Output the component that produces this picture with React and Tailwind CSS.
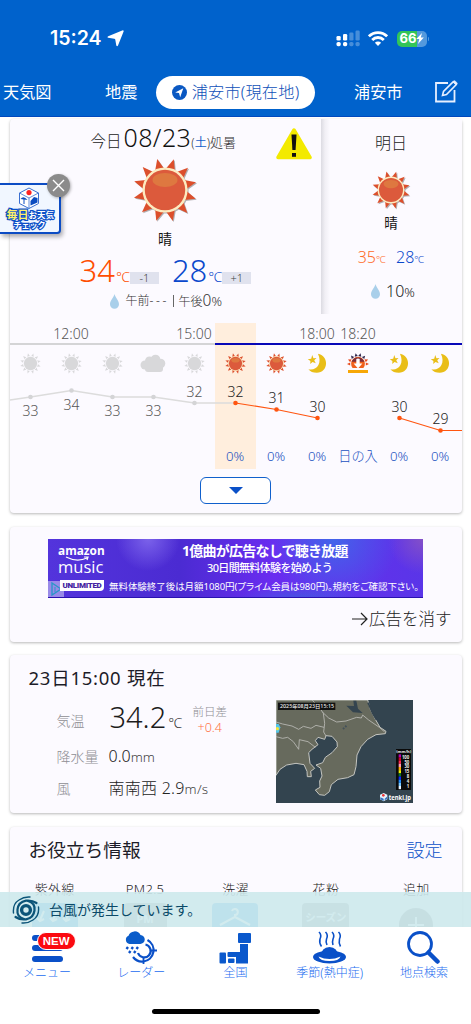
import React from 'react';
import clsx from 'clsx';

const RAYS = [15, 45, 75, 105, 135, 165, 195, 225, 255, 285, 315, 345];

function Sun({ size, muted }) {
  return (
    <svg
      width={size}
      height={size}
      viewBox="-32 -32 64 64"
      className={clsx('block', !muted && size > 30 && 'drop-shadow-[1px_1px_0.5px_rgba(0,0,0,0.3)]')}
    >
      {RAYS.map((a) => (
        <polygon key={a} points="-4.6,-21 4.6,-21 0.5,-32" fill={muted ? '#d8d8da' : '#dc4f2c'} transform={`rotate(${a})`} />
      ))}
      <circle r="22.6" fill={muted ? '#fcfaff' : '#fdebc0'} />
      <circle r="20.2" fill={muted ? '#d8d8da' : '#dc5a3c'} />
      {!muted && <ellipse cy="-10" rx="12.5" ry="7" fill="#de7840" />}
    </svg>
  );
}

function Cloud() {
  return (
    <svg width="26" height="19" viewBox="0 0 26 19" className="block" fill="#d8d8da">
      <circle cx="5" cy="11" r="4.5" />
      <circle cx="9.5" cy="7" r="4.5" />
      <circle cx="15.5" cy="5.5" r="4.8" />
      <circle cx="20.5" cy="9.5" r="4.8" />
      <rect x="5" y="7" width="18" height="11" rx="3" />
    </svg>
  );
}

function Moon() {
  return (
    <svg width="20" height="21" viewBox="0 0 21 22" className="block">
      <path d="M11.5 0.8C17 2 20 6 20 10.8C20 16.5 16 20.8 10.3 20.8C6.5 20.8 3.3 19.3 1.5 17C9.5 19 16.5 11.5 11.5 0.8Z" fill="#e9be18" />
      <path d="M5.5 2.2L6.8 5.6L10 5.2L7.6 7.7L9.2 10.8L5.8 9.5L3.4 11.6L3.6 8.4L0.8 6.6L4.4 6Z" fill="#e9be18" />
    </svg>
  );
}

function Sunset() {
  return (
    <svg width="22" height="20" viewBox="0 0 22 20" className="block">
      {[-90, -66, -40, -13, 13, 40, 66, 90].map((a) => (
        <polygon key={a} points="-1.6,-7.8 1.6,-7.8 0.1,-11" fill={Math.abs(a) > 50 ? '#e84a1c' : '#32284e'} transform={`translate(11 11) rotate(${a})`} />
      ))}
      <path d="M5.6 15A6.9 6.9 0 1 1 16.4 15Z" fill="#f0601c" />
      <path d="M4.6 8.8A6.9 6.9 0 0 1 17.4 8.8Z" fill="#7c2f3c" />
      <path d="M9.3 6Q11 4.8 12.7 6V10.5H15.4L11 15.4L6.6 10.5H9.3Z" fill="#fff" />
      <rect x="1" y="17" width="20" height="3" fill="#f7a707" />
    </svg>
  );
}

function Drop() {
  return (
    <svg width="9" height="15" viewBox="0 0 9 15" className="block" fill="#a9cfea">
      <path d="M4.5 0C5.2 3.2 9 6.6 9 10.2A4.5 4.5 0 0 1 0 10.2C0 6.6 3.8 3.2 4.5 0Z" />
    </svg>
  );
}

function StatusBar() {
  return (
    <div className="flex h-[75px] items-center justify-between pl-[50px] pr-[42px] pt-0.5">
      <div className="flex items-center">
        <span className="font-['Inter',sans-serif] text-[19.5px] font-semibold">15:24</span>
        <svg width="17" height="17" viewBox="0 0 17 17" className="ml-[5px]" fill="#fff">
          <path d="M15.2 0.4Q17 -0.1 16.6 1.6L11 15.4Q10.200 17 9.300 15.400L8.300 9.800Q8.200 8.900 7.300 8.800L1.200 7.800Q-0.300 7.200 1.200 6.200Z" />
        </svg>
      </div>
      <div className="flex items-center">
        <svg width="24" height="17" viewBox="0 0 24 17" fill="#fff">
          <rect x="0.5" y="6" width="4.2" height="4.5" rx="1.3" />
          <rect x="7" y="4" width="4.2" height="6.5" rx="1.3" />
          <rect x="0.5" y="12" width="4.2" height="4.2" rx="1.6" />
          <rect x="7" y="12" width="4.2" height="4.2" rx="1.6" />
          <g opacity="0.28">
            <rect x="13.3" y="2.5" width="4.2" height="8" rx="1.3" />
            <rect x="19.5" y="0.5" width="4.2" height="10" rx="1.3" />
            <rect x="13.3" y="12" width="4.2" height="4.2" rx="1.6" />
            <rect x="19.5" y="12" width="4.2" height="4.2" rx="1.6" />
          </g>
        </svg>
        <svg width="20" height="15" viewBox="0 0 20 15" className="ml-2" fill="none" stroke="#fff" strokeWidth="2.8">
          <path d="M0.9 5.3A12.9 12.9 0 0 1 19.1 5.3" />
          <path d="M4.2 8.9A8.2 8.2 0 0 1 15.8 8.9" />
          <path d="M10 15L6.9 11.8A4.4 4.4 0 0 1 13.1 11.8Z" fill="#fff" stroke="none" />
        </svg>
        <div className="ml-[9px] flex h-4 w-[30px] items-center justify-center rounded-[5px] bg-[linear-gradient(90deg,#32c558_66%,#5399dd_66%)]">
          <span className="font-['Inter',sans-serif] text-[13px] font-bold leading-none">66</span>
          <svg width="8" height="11" viewBox="0 0 8 11" fill="#fff">
            <path d="M6 0L0.3 6H3.3L2 11L7.8 4.6H4.8Z" />
          </svg>
        </div>
        <div className="ml-px h-1 w-px rounded-r bg-[#5399dd]" />
      </div>
    </div>
  );
}

function Tabs() {
  return (
    <div className="flex h-[34px] items-center text-[16.2px] font-normal">
      <span className="ml-[3px] w-[102px]">天気図</span>
      <span className="w-[51px]">地震</span>
      <div className="flex h-[33px] w-[159px] items-center justify-center rounded-full bg-white font-light text-[#0f50b8]">
        <svg width="15" height="15" viewBox="0 0 15 15" className="mr-[5px]">
          <circle cx="7.5" cy="7.5" r="7.5" fill="#0a58c2" />
          <path d="M11.3 3.2L8.2 12.2L7 8L3.2 7.6Z" fill="#fff" />
        </svg>
        <span className="tracking-[0.2px]">浦安市(現在地)</span>
      </div>
      <span className="ml-[39px]">浦安市</span>
      <svg width="24" height="24" viewBox="0 0 24 24" className="ml-[31px]" fill="none" stroke="#e6efff">
        <path d="M14 3H2V21.5H20.5V10" strokeWidth="1.8" />
        <path d="M8.5 15.500L9.500 11.500L19.300 1.700L22.300 4.500L12.500 14.500Z" strokeWidth="1.6" />
        <path d="M19 2L20.6 0.5L23.5 3.2L22 4.700Z" fill="#e6efff" strokeWidth="0.5" />
      </svg>
    </div>
  );
}

function Card({ className, children }) {
  return (
    <section className={clsx('ml-[9.5px] w-[452px] shrink-0 rounded bg-[#fcfaff] shadow-[0_1px_3px_rgba(0,0,0,0.28)]', className)}>
      {children}
    </section>
  );
}

function Today() {
  return (
    <div className="relative h-[195px] w-[311px]">
      <div className="flex h-[38px] items-baseline pl-[81px] leading-[37px]">
        <span className="text-[15.5px] text-[#222]">今日</span>
        <span className="ml-0.5 text-[25px] tracking-[0.4px] text-[#111]">08/23</span>
        <span className="text-[12px] text-[#333]">(<span className="font-normal text-[#1560c8]">土</span>)</span>
        <span className="text-[13px] text-[#333]">処暑</span>
      </div>
      <svg width="36" height="32" viewBox="0 0 36 32" className="absolute left-[266px] top-[9px]">
        <path d="M18 2L34 29.5H2Z" fill="#f3ea00" stroke="#f3ea00" strokeWidth="3.5" strokeLinejoin="round" />
        <path d="M15.5 6.5H20.5L19.6 22H16.4Z" fill="#111" />
        <rect x="16" y="25" width="4" height="3.8" fill="#111" />
      </svg>
      <div className="mt-px ml-[123px]"><Sun size={64} /></div>
      <div className="mt-[7px] h-5 text-center text-[14px] font-normal leading-5 text-[#111]">晴</div>
      <div className="mt-[3px] flex h-[37px] items-baseline pl-[70px] leading-[37px]">
        <span className="text-[31px] text-[#ff4d00]">34</span>
        <span className="ml-px w-[14px] text-[14px] text-[#ff4d00]">℃</span>
        <span className="h-3 w-[29px] bg-[#e0e2ee] text-center text-[11px] leading-3 text-[#444]">-1</span>
        <span className="ml-[13px] text-[31px] text-[#0a48cc]">28</span>
        <span className="ml-px w-[14px] text-[14px] text-[#0a48cc]">℃</span>
        <span className="h-3 w-[29px] bg-[#e0e2ee] text-center text-[11px] leading-3 text-[#444]">+1</span>
      </div>
      <div className="mt-px flex h-[22px] items-center pl-[100px] text-[12px] text-[#333]">
        <Drop />
        <span className="ml-[7px] w-[47px]">午前<span className="tracking-[2.6px]">---</span></span>
        <span className="h-3 w-px bg-[#666]" />
        <span className="ml-[5px] flex items-baseline leading-5">午後<span className="text-[15.500px]">0</span><span className="text-[13px]">%</span></span>
      </div>
    </div>
  );
}

function Tomorrow() {
  return (
    <div className="flex h-[195px] w-[141px] flex-col items-center bg-[linear-gradient(90deg,#dcdbe2_0px,#f1eff5_4px,#fcfaff_9px)]">
      <div className="mt-3 h-6 text-[16px] leading-6 text-[#222]">明日</div>
      <div className="mt-4"><Sun size={38} /></div>
      <div className="mt-1 h-5 text-[13.5px] font-normal leading-5 text-[#111]">晴</div>
      <div className="mt-[14px] flex h-5 items-baseline text-[16px] leading-5">
        <span className="text-[#ff6a28]">35</span>
        <span className="w-[12px] text-[10px] text-[#ff6a28]">℃</span>
        <span className="ml-2 text-[#0a48cc]">28</span>
        <span className="w-[10px] text-[10px] text-[#0a48cc]">℃</span>
      </div>
      <div className="mt-3 flex h-6 items-center pl-1 text-[16px] text-[#222]">
        <Drop />
        <span className="ml-[6px]">10<span className="text-[13px]">%</span></span>
      </div>
    </div>
  );
}

const HOURS = [
  { icon: 'past', pop: '' },
  { time: '12:00', icon: 'past', pop: '' },
  { icon: 'past', pop: '' },
  { icon: 'cloud', pop: '' },
  { time: '15:00', icon: 'past', pop: '' },
  { icon: 'sun', pop: '0%' },
  { icon: 'sun', pop: '0%' },
  { time: '18:00', icon: 'moon', pop: '0%' },
  { time: '18:20', icon: 'sunset', pop: '日の入' },
  { icon: 'moon', pop: '0%' },
  { icon: 'moon', pop: '0%' },
];

// x/y of the marker, then the baseline of its label
const TEMPS = [
  [20.5, 24, 43, '33'],
  [61.5, 17.5, 37, '34'],
  [102.5, 24, 43, '33'],
  [143.5, 24, 43, '33'],
  [184.5, 30, 24, '32'],
  [225.5, 30, 24, '32'],
  [266.5, 36.5, 30, '31'],
  [307.5, 45, 38.5, '30'],
  [389.5, 45, 38.5, '30'],
  [430.5, 57.5, 51, '29'],
];

function HourIcon({ kind }) {
  if (kind === 'past') return <Sun size={21} muted />;
  if (kind === 'cloud') return <Cloud />;
  if (kind === 'sun') return <Sun size={21} />;
  if (kind === 'moon') return <Moon />;
  return <Sunset />;
}

function Hourly() {
  return (
    <div className="mt-[9px] h-[146px] bg-[linear-gradient(90deg,transparent_205px,#ffeedd_205px,#ffeedd_246px,transparent_246px)]">
      <div className="grid h-[20px] w-[451px] grid-cols-11">
        {HOURS.map((h, i) => (
          <span key={i} className="flex justify-center whitespace-nowrap text-[14px] leading-[22px] text-[#555]">{h.time}</span>
        ))}
      </div>
      <div className="h-0.5 bg-[linear-gradient(90deg,#d4d4d6_205px,#0808b8_205px)]" />
      <div className="grid h-[35px] w-[451px] grid-cols-11">
        {HOURS.map((h, i) => (
          <span key={i} className="flex items-center justify-center pt-px"><HourIcon kind={h.icon} /></span>
        ))}
      </div>
      <svg width="452" height="66" viewBox="0 7 452 66" className="block overflow-visible text-[14px]">
        <polyline points="0,27 20.5,24 61.5,17.5 102.5,24 143.5,24 184.5,30 225.5,30" fill="none" stroke="#dcdcdc" strokeWidth="1.3" />
        <polyline points="225.5,30 266.5,36.5 307.5,45" fill="none" stroke="#ff5510" strokeWidth="1.2" />
        <polyline points="389.5,45 430.5,57.5 452,57.5" fill="none" stroke="#ff5510" strokeWidth="1.2" />
        {TEMPS.map(([x, y, ty, label], i) => (
          <g key={i}>
            <circle cx={x} cy={y} r="2.3" fill={i < 5 ? '#d4d4d6' : '#ff5510'} />
            <text x={x} y={ty} textAnchor="middle" fill={i < 5 ? '#555' : '#222'}>{label}</text>
          </g>
        ))}
      </svg>
      <div className="grid h-[22px] w-[451px] grid-cols-11">
        {HOURS.map((h, i) => (
          <span key={i} className="flex justify-center whitespace-nowrap text-[13.2px] leading-[21px] text-[#1a50c0]">{h.pop}</span>
        ))}
      </div>
    </div>
  );
}

function Ad() {
  return (
    <div className="mx-auto flex h-[59px] w-[375px] overflow-hidden border-b border-[#2a12b0] bg-[radial-gradient(circle_at_100px_0px,#7b62ea_0px,transparent_32px),radial-gradient(circle_at_285px_0px,#4264ea_0px,transparent_65px),radial-gradient(ellipse_at_250px_60px,#4356e0_0px,transparent_60px),radial-gradient(circle_at_375px_0px,#8450c8_0px,transparent_35px),linear-gradient(90deg,#5334dc,#4b2bd2_35%,#6a2cf0_60%,#5a35e8)] text-white">
      <div className="relative w-[60px] shrink-0 pt-1 pl-[10px]">
        <svg width="16" height="16" viewBox="0 0 16 16" className="absolute bottom-0 left-0">
          <rect width="16" height="16" fill="#c8c4f0" opacity="0.6" />
          <path d="M4 2L13 8L4 14Z" fill="none" stroke="#2697c8" strokeWidth="1.3" />
          <path d="M7 6V11" stroke="#2697c8" />
        </svg>
        <div className="font-['Open_Sans',sans-serif] text-[11.8px] font-bold leading-[15px]">amazon</div>
        <svg width="26" height="5" viewBox="0 0 26 5" className="absolute left-[17px] top-[17px]" fill="none" stroke="#fff" strokeWidth="1.2">
          <path d="M1 1Q12 6.5 22 2M19 1H23L22 4" />
        </svg>
        <div className="font-['Open_Sans',sans-serif] text-[16.5px] font-medium leading-[18px]">music</div>
        <div className="relative mt-[4px] ml-[2px] h-[11px] w-[44px] rounded-br bg-white text-center font-['Roboto',sans-serif] text-[8px] font-black leading-[11px] tracking-[-0.3px] text-[#4422a0]">UNLIMITED</div>
      </div>
      <div className="w-[315px] whitespace-nowrap">
        <div className="mt-[3px] ml-[74px] text-[14px] font-bold leading-[17px] tracking-[-0.75px]">1億曲が広告なしで聴き放題</div>
        <div className="ml-[99px] text-[11px] font-medium leading-[17px] tracking-[-0.650px]">30日間無料体験を始めよう</div>
        <div className="mt-[2px] ml-px text-[9.500px] font-normal leading-[17px] tracking-[-0.050px] [font-feature-settings:'palt']">無料体験終了後は月額1080円(プライム会員は980円)。規約をご確認下さい。</div>
      </div>
    </div>
  );
}

function RadarMap() {
  const legend = ['#b400b4', '#d20028', '#ff2850', '#ff9bb4', '#ffaa00', '#f5f000', '#0a7828', '#0a28ff', '#1e8cff', '#78c8ff', '#e8f4ff'];
  return (
    <svg width="137" height="103" viewBox="0 0 411 309" className="block shrink-0">
      <rect width="411" height="309" fill="#33444f" />
      <path
        d="M0 0H275L283 28L298 58L312 82L330 94L328 101L300 104L275 118L255 140L243 165L240 200L234 224L215 233L186 238L166 254L160 275L146 286L130 284L118 270L132 262L131 243L138 228L134 205L120 195L140 188L148 172L168 158L184 140L183 126L168 109L150 107L146 118L126 112L118 122L126 134L108 148L98 158L102 190L116 205L104 214L106 230L94 230L93 214L84 194L60 190L32 195L12 208L0 226Z"
        fill="#676a5d"
        stroke="#c4c5c0"
        strokeWidth="3"
        strokeLinejoin="round"
      />
      <path d="M211 17L234 18L232 2H241L246 26L260 39L231 37Z" fill="#34444f" />
      <path d="M276 8L290 40L301 59" stroke="#34444f" strokeWidth="5" fill="none" />
      <g fill="none" stroke="#b9bab5" strokeWidth="2.6" strokeLinejoin="round">
        <path d="M108 0L130 22L142 40L146 70L143 96L150 108" />
        <path d="M140 37L158 54L182 66L210 63L242 52L256 54L260 45L278 60L310 82L326 96" />
        <path d="M0 66L20 72L48 78L68 88L82 79L105 85L120 76L144 82" />
        <path d="M0 110L20 115L35 112L52 125L68 148L70 119L96 125L118 142" />
      </g>
      <path d="M0 72H8L13 82L8 98H0Z" fill="#55c5e8" />
      <circle cx="4" cy="86" r="5" fill="#f5e436" />
      <path d="M201 87L213 76" stroke="#44515a" strokeWidth="6" strokeDasharray="5 4" />
      <rect x="6" y="8" width="172" height="22" fill="#111" />
      <text x="12" y="24" fontSize="15" fontWeight="500" fill="#eee" textLength="162" lengthAdjust="spacingAndGlyphs">2025年08月23日15:15</text>
      <rect x="360" y="147" width="45" height="123" fill="#0a0a0a" />
      <text x="383" y="160" fontSize="12" fontWeight="700" fill="#eee" textAnchor="middle">(mm/h)</text>
      {legend.map((c, i) => (
        <rect key={c} x="368" y={163 + i * 9.5} width="7" height="9.5" fill={c} />
      ))}
      {['100', '50', '30', '15', '8', '4', '1'].map((t, i) => (
        <text key={t} x="400" y={176 + i * 14.7} fontSize="13" fontWeight="700" fill="#eee" textAnchor="end">{t}</text>
      ))}
      <path d="M312 284L323 279L334 284V298L323 304L312 298Z" fill="#e4f1fc" />
      <path d="M313 292L323 296V303L313 298Z" fill="#2f6fc0" />
      <path d="M326 296L333 290V297L326 301Z" fill="#2f6fc0" />
      <circle cx="322" cy="286" r="4" fill="#e33" />
      <text x="338" y="300" fontSize="20" fontWeight="700" fill="#fff" textLength="67" lengthAdjust="spacingAndGlyphs">tenki.jp</text>
    </svg>
  );
}

function CurrentCard() {
  return (
    <Card className="mt-[13px] h-[158px] overflow-hidden pl-[19px]">
      <h2 className="mt-2.5 h-7 text-[18.5px] font-normal leading-[26px] tracking-[0.75px] text-[#1c1c28]">23日15:00 現在</h2>
      <div className="flex">
        <div className="w-[219px] pl-[28px] text-[14px] text-[#8e8e93]">
          <div className="mt-[5px] flex h-11 items-center">
            <span className="w-[53px]">気温</span>
            <span className="flex w-[83px] items-baseline text-[29px] leading-10 text-[#1c1c1c]">34.2<span className="ml-0.5 text-[14px] text-[#333]">℃</span></span>
            <span className="flex flex-col items-center text-[11.5px] leading-4">
              前日差
              <span className="text-[12.5px] text-[#ff7043]">+0.4</span>
            </span>
          </div>
          <div className="flex h-7 items-center">
            <span className="w-[52px]">降水量</span>
            <span className="text-[16px] text-[#222]">0.0<span className="text-[13.500px] text-[#444]">mm</span></span>
          </div>
          <div className="mt-1 flex h-7 items-center">
            <span className="w-[52px]">風</span>
            <span className="text-[16px] tracking-[0.25px] text-[#222]">南南西 2.9<span className="text-[13.500px] text-[#444]">m/s</span></span>
          </div>
        </div>
        <div className="ml-[28.500px] mt-[7px]"><RadarMap /></div>
      </div>
    </Card>
  );
}

function InfoTile({ kind }) {
  if (kind === 'add') {
    return (
      <div className="mt-[5px] flex h-[34px] w-[34px] items-center justify-center rounded-full bg-[#888]">
        <svg width="16" height="16" viewBox="0 0 16 16" stroke="#fff" strokeWidth="2"><path d="M8 0V16M0 8H16" /></svg>
      </div>
    );
  }
  if (kind === 'season') {
    return <div className="h-[46px] w-[47px] rounded bg-[#999] pt-[5px] text-center text-[10.5px] font-bold leading-[18px] text-white">シーズン</div>;
  }
  if (kind === 'pm') {
    return <div className="h-[46px] w-[43px] rounded bg-[#999] pt-[7px] text-center text-[11px] font-bold leading-[18px] text-white">PM</div>;
  }
  return (
    <div className="h-[46px] w-[46px] rounded bg-[#3ba7e8]">
      <svg width="46" height="30" viewBox="0 0 46 30" fill="none" stroke="#fff" strokeWidth="2">
        {kind === 'uv' && <path d="M12 8L8 17M25 8L21 17M38 8L34 17M5 15L8 18L12 16M18 15L21 18L25 16M31 15L34 18L38 16" />}
        {kind === 'wash' && <path d="M20 8A3 3 0 1 1 23 12V14L8 22M23 14L38 22" />}
      </svg>
    </div>
  );
}

const INFOS = [
  ['紫外線', 'uv'],
  ['PM2.5', 'pm'],
  ['洗濯', 'wash'],
  ['花粉', 'season'],
  ['追加', 'add'],
];

function InfoCard() {
  return (
    <Card className="mt-[14px] h-[140px]">
      <div className="flex h-[46px] items-center justify-between px-[19px]">
        <h2 className="text-[18.700px] font-normal text-[#1c1c28]">お役立ち情報</h2>
        <span className="text-[18px] text-[#0a50c8]">設定</span>
      </div>
      <div className="grid grid-cols-5">
        {INFOS.map(([label, kind]) => (
          <div key={label} className="flex flex-col items-center text-[13px] text-[#222]">
            <span className="h-[30px] leading-[33px] tracking-[0.3px]">{label}</span>
            <InfoTile kind={kind} />
          </div>
        ))}
      </div>
    </Card>
  );
}

// sticks to the left edge, above the scrolling cards
function CheckBanner() {
  return (
    <div className="absolute left-0 top-[183px] h-[51px] w-[61px] rounded-r border-2 border-l-0 border-[#0c4cc4] bg-[#f1f7ff] shadow-[2px_3px_4px_rgba(0,0,0,0.3)]">
      <svg width="22" height="22" viewBox="0 0 22 22" className="ml-[18px] mt-[2px] block">
        <path d="M11 1L20.5 6V16.5L11 21.5L1.5 16.5V6Z" fill="#fff" stroke="#3a6fd0" strokeWidth="1" />
        <path d="M11 11V21.5M11 11L1.5 6M11 11L20.5 6" stroke="#3a6fd0" strokeWidth="0.8" />
        <circle cx="11" cy="5.6" r="2.6" fill="#f22" />
        <path d="M2.5 12Q5.5 8 9.5 13Z" fill="#0a4cc0" />
        <path d="M6 12V17" stroke="#0a4cc0" />
        <path d="M12.5 14L16 10L19.5 11V15.5L12.5 18.5Z" fill="#0a4cc0" />
      </svg>
      <div className="flex h-[12px] w-[54px] items-center justify-end whitespace-nowrap text-[8.500px] font-bold leading-[12px] text-white [paint-order:stroke_fill] [-webkit-text-stroke:2.4px_#0c50c8]">
        <span className="text-[11px] text-[#fff06a]">毎日</span>お天気
      </div>
      <div className="-mt-px text-center text-[8px] font-bold leading-[10px] text-white [paint-order:stroke_fill] [-webkit-text-stroke:2.4px_#0c50c8]">チェック</div>
      <div className="absolute -top-[11px] left-[47px] flex h-[23px] w-[23px] items-center justify-center rounded-full bg-[#8b8b8b] shadow-[1px_1px_3px_rgba(0,0,0,0.3)]">
        <svg width="13" height="13" viewBox="0 0 13 13" stroke="#fff" strokeWidth="1.4">
          <path d="M1 1L12 12M12 1L1 12" />
        </svg>
      </div>
    </div>
  );
}

function Typhoon() {
  return (
    <svg width="28" height="28" viewBox="0 0 28 28" fill="none" stroke="#0b5478" strokeLinecap="round">
      <circle cx="14" cy="14" r="4.4" strokeWidth="3.4" />
      <path d="M12 23Q4.500 21 5.500 13.500Q6.500 6 14 4.700Q20 4 24.500 7" strokeWidth="2.2" />
      <path d="M16 5Q23.500 7 22.500 14.500Q21.500 22 14 23.300Q8 24 3.500 21" strokeWidth="2.2" />
      <path d="M1.500 17Q0.500 8 7 4Q12 0.5 18 1" strokeWidth="1.4" />
      <path d="M26.500 11Q27.500 20 21 24Q16 27.5 10 27" strokeWidth="1.4" />
    </svg>
  );
}

function NavIcon({ kind }) {
  if (kind === 'menu') {
    return (
      <div className="relative h-[32px] w-[31px]">
        <div className="flex flex-col gap-[4.500px] pt-[3px]">
          <span className="h-[6px] rounded-full bg-[#0a50c8]" />
          <span className="h-[6px] rounded-full bg-[#0a50c8]" />
          <span className="h-[6px] rounded-full bg-[#0a50c8]" />
        </div>
        <span className="absolute left-[5px] top-0 h-[18px] w-[39px] rounded-full border border-white bg-[#fb0a10] text-center font-['Liberation_Sans',sans-serif] text-[11.5px] font-bold leading-4 text-white">NEW</span>
      </div>
    );
  }
  if (kind === 'radar') {
    return (
      <svg width="32" height="33" viewBox="0 0 32 33" fill="none" stroke="#0a50c8" strokeWidth="2.2">
        <path d="M22.5 9A11.5 11.5 0 0 1 18.500 30.500A11.500 11.500 0 0 1 8 26" />
        <path d="M20.500 13.500A6.500 6.500 0 1 1 13 22" />
        <path d="M26 19.5H32M18.5 27V33" strokeWidth="1.8" />
        <path d="M4.5 13A4.3 4.3 0 0 1 3.5 4.8A6.5 6.5 0 0 1 15.5 4A4.5 4.5 0 0 1 15 13Z" fill="#0a5cca" stroke="none" />
        <path d="M3 16L1.5 18M8 16L6.5 18M13 16L11.5 18M5.5 20L4 22M10.5 20L9 22" strokeWidth="2.4" />
      </svg>
    );
  }
  if (kind === 'japan') {
    return (
      <svg width="33" height="32" viewBox="0 0 33 32" fill="#0a58cc">
        <rect x="19" y="1" width="13" height="10" rx="1" />
        <path d="M21 12H29V31.5H17V23H14.5V20H21Z" />
        <rect x="0.5" y="20.5" width="6.5" height="11" rx="1" />
        <rect x="8.5" y="20" width="9" height="5" rx="1" />
        <rect x="9" y="26.5" width="6.5" height="4.5" rx="1" />
      </svg>
    );
  }
  if (kind === 'heat') {
    return (
      <svg width="33" height="33" viewBox="0 0 33 33" fill="none" stroke="#0a50c8" strokeWidth="1.6">
        <path d="M6 1Q9 4 7 8Q6 12 8.5 15.5M12.5 1Q15.5 4 13.5 8Q12.5 11 14 14M19 1Q22 4 20 8Q19 11 20 14M25.5 1Q28.5 4 26.5 8Q25.5 12 27.5 15.5" />
        <ellipse cx="16.5" cy="26" rx="16.5" ry="6.5" fill="#0a50c8" stroke="none" />
        <path d="M7.5 26Q8.5 16 16.5 16Q24.5 16 25.5 26Z" fill="#0a50c8" stroke="none" />
        <path d="M5.5 25.5Q16.5 30.5 27.5 25.5Q26 30 16.5 30Q7 30 5.5 25.5Z" fill="#fff" stroke="none" />
      </svg>
    );
  }
  return (
    <svg width="33" height="33" viewBox="0 0 33 33" fill="none" stroke="#0a50c8">
      <circle cx="13" cy="13" r="11.5" strokeWidth="2.8" />
      <path d="M21.5 21.5L30.500 30.500" strokeWidth="4.5" strokeLinecap="round" />
    </svg>
  );
}

const NAV = [
  ['メニュー', 'menu'],
  ['レーダー', 'radar'],
  ['全国', 'japan'],
  ['季節(熱中症)', 'heat'],
  ['地点検索', 'search'],
];

export default function App() {
  return (
    <div className="relative flex h-[1024px] w-[471px] flex-col overflow-hidden bg-white font-['Noto_Sans','Noto_Sans_CJK_JP',sans-serif] font-light">
      <header className="h-[117px] shrink-0 border-b border-[#0048bd] bg-[#0062cc] text-white">
        <StatusBar />
        <Tabs />
      </header>

      <main className="relative flex h-[810px] flex-col overflow-hidden">
        <Card className="mt-[2px] h-[394px]">
          <div className="flex">
            <Today />
            <Tomorrow />
          </div>
          <Hourly />
          <div className="mx-auto mt-2 flex h-[27px] w-[71px] items-center justify-center rounded-md border-[1.5px] border-[#1060cc] bg-white">
            <svg width="14" height="7" viewBox="0 0 14 7"><path d="M0 0H14L7 7Z" fill="#0a50c8" /></svg>
          </div>
        </Card>

        <Card className="mt-[14px] h-[115px] pt-[12px]">
          <Ad />
          <div className="mt-[7px] flex h-7 items-center justify-end pr-[10px] text-[16.500px] text-[#222]">
            <svg width="16" height="14" viewBox="0 0 16 14" fill="none" stroke="#222" strokeWidth="1.2" className="mr-px">
              <path d="M0 7H15M9 1L15 7L9 13" />
            </svg>
            広告を消す
          </div>
        </Card>

        <CurrentCard />
        <InfoCard />

        <div className="absolute inset-x-0 bottom-0 flex h-[35px] items-center bg-[#cde9ec]/90 pl-[12px] text-[#0b4a68]">
          <Typhoon />
          <span className="ml-[9px] text-[14px] font-normal">台風が発生しています。</span>
        </div>
      </main>

      <nav className="grid h-[82px] shrink-0 grid-cols-5 bg-white pt-1">
        {NAV.map(([label, kind]) => (
          <div key={label} className="flex flex-col items-center text-[12px] text-[#1a6cf0]">
            <div className="flex h-[33px] items-center"><NavIcon kind={kind} /></div>
            <span className="leading-[17px]">{label}</span>
          </div>
        ))}
      </nav>
      <div className="mx-auto h-[5px] w-[168px] rounded-full bg-black" />
      <CheckBanner />
    </div>
  );
}
